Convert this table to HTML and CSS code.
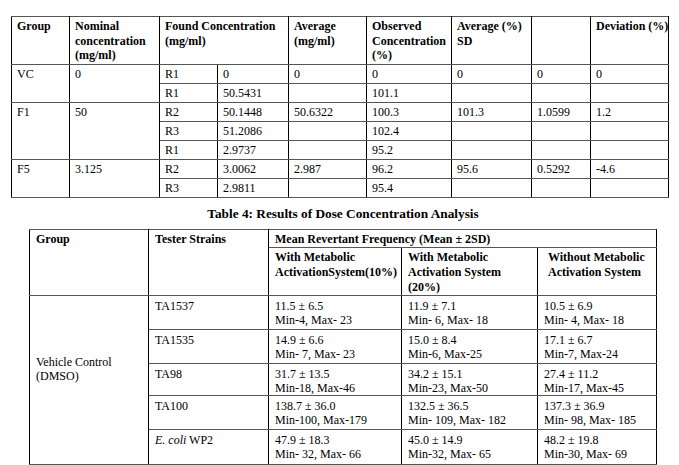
FILE: index.html
```html
<!DOCTYPE html>
<html>
<head>
<meta charset="utf-8">
<link rel="stylesheet" href="styles.css">
</head>
<body>
<div class="page">
  <table class="t1">
    <colgroup>
      <col style="width:58px"><col style="width:90px"><col style="width:58px"><col style="width:71px"><col style="width:78px"><col style="width:85px"><col style="width:80px"><col style="width:59px"><col style="width:78px">
    </colgroup>
    <thead>
      <tr class="hrow">
        <th>Group</th>
        <th>Nominal<br>concentration<br>(mg/ml)</th>
        <th colspan="2">Found Concentration<br>(mg/ml)</th>
        <th>Average<br>(mg/ml)</th>
        <th>Observed<br>Concentration<br>(%)</th>
        <th>Average (%)<br>SD</th>
        <th></th>
        <th>Deviation (%)</th>
      </tr>
    </thead>
    <tbody>
      <tr><td rowspan="2" class="grp">VC</td><td rowspan="2" class="grp">0</td><td>R1</td><td>0</td><td>0</td><td>0</td><td>0</td><td>0</td><td>0</td></tr>
      <tr><td>R1</td><td>50.5431</td><td></td><td>101.1</td><td></td><td></td><td></td></tr>
      <tr><td rowspan="3" class="grp">F1</td><td rowspan="3" class="grp">50</td><td>R2</td><td>50.1448</td><td>50.6322</td><td>100.3</td><td>101.3</td><td>1.0599</td><td>1.2</td></tr>
      <tr><td>R3</td><td>51.2086</td><td></td><td>102.4</td><td></td><td></td><td></td></tr>
      <tr><td>R1</td><td>2.9737</td><td></td><td>95.2</td><td></td><td></td><td></td></tr>
      <tr><td rowspan="2" class="grp">F5</td><td rowspan="2" class="grp">3.125</td><td>R2</td><td>3.0062</td><td>2.987</td><td>96.2</td><td>95.6</td><td>0.5292</td><td>-4.6</td></tr>
      <tr><td>R3</td><td>2.9811</td><td></td><td>95.4</td><td></td><td></td><td></td></tr>
    </tbody>
  </table>

  <div class="caption">Table 4: Results of Dose Concentration Analysis</div>

  <table class="t2">
    <colgroup>
      <col style="width:119px"><col style="width:120px"><col style="width:133px"><col style="width:136px"><col style="width:119px">
    </colgroup>
    <thead>
      <tr class="h1">
        <th rowspan="2">Group</th>
        <th rowspan="2">Tester Strains</th>
        <th colspan="3">Mean Revertant Frequency (Mean ± 2SD)</th>
      </tr>
      <tr class="h2">
        <th>With Metabolic<br>ActivationSystem(10%)</th>
        <th>With Metabolic<br>Activation System<br>(20%)</th>
        <th class="indent">Without Metabolic<br>Activation System</th>
      </tr>
    </thead>
    <tbody>
      <tr class="r34">
        <td rowspan="5" class="vc">Vehicle Control<br>(DMSO)</td>
        <td>TA1537</td>
        <td>11.5 ± 6.5<br>Min-4, Max- 23</td>
        <td>11.9 ± 7.1<br>Min- 6, Max- 18</td>
        <td>10.5 ± 6.9<br>Min- 4, Max- 18</td>
      </tr>
      <tr class="r34">
        <td>TA1535</td>
        <td>14.9 ± 6.6<br>Min- 7, Max- 23</td>
        <td>15.0 ± 8.4<br>Min-6, Max-25</td>
        <td>17.1 ± 6.7<br>Min-7, Max-24</td>
      </tr>
      <tr class="r32">
        <td>TA98</td>
        <td>31.7 ± 13.5<br>Min-18, Max-46</td>
        <td>34.2 ± 15.1<br>Min-23, Max-50</td>
        <td>27.4 ± 11.2<br>Min-17, Max-45</td>
      </tr>
      <tr class="r34">
        <td>TA100</td>
        <td>138.7 ± 36.0<br>Min-100, Max-179</td>
        <td>132.5 ± 36.5<br>Min- 109, Max- 182</td>
        <td>137.3 ± 36.9<br>Min- 98, Max- 185</td>
      </tr>
      <tr class="r35">
        <td><i>E. coli</i> WP2</td>
        <td>47.9 ± 18.3<br>Min- 32, Max- 66</td>
        <td>45.0 ± 14.9<br>Min-32, Max- 65</td>
        <td>48.2 ± 19.8<br>Min-30, Max- 69</td>
      </tr>
    </tbody>
  </table>
</div>
</body>
</html>
```

FILE: styles.css
```css
html, body {
  margin: 0;
  padding: 0;
  background: #ffffff;
}

body {
  font-family: "Liberation Serif", "Times New Roman", serif;
  font-size: 12px;
  color: #000;
}

.page {
  display: flex;
  flex-direction: column;
  align-items: flex-start;
  padding: 16px 11px 0 11px;
}

table {
  border-collapse: collapse;
  table-layout: fixed;
  border: 1px solid #000;
}

th, td {
  border-left: 1px solid #000;
  border-right: 1px solid #000;
  border-top: 1px solid #555;
  border-bottom: 1px solid #555;
  text-align: left;
  vertical-align: top;
  padding: 2px 0 0 5px;
  line-height: 14px;
  white-space: nowrap;
  overflow: visible;
}

th {
  font-weight: bold;
  line-height: 14.5px;
}

.t1 {
  width: 658px;
}

.t1 .hrow {
  height: 48px;
}

.t1 tbody tr {
  height: 19px;
}

.t1 td {
  padding-top: 2px;
}

.caption {
  align-self: stretch;
  text-align: center;
  font-weight: bold;
  font-size: 13.3px;
  line-height: 14px;
  margin-top: 9px;
  padding-left: 7px;
}

.t2 {
  width: 628px;
  margin-top: 8px;
  margin-left: 18px;
}

.t2 th, .t2 td {
  padding-left: 6px;
}

.t2 .h1 {
  height: 18px;
}

.t2 .h2 {
  height: 47px;
}

.t2 .h2 th {
  line-height: 15px;
}

.t2 .indent {
  padding-left: 10px;
}

.t2 tbody td {
  padding-top: 3px;
}

.t2 .r34 { height: 34px; }
.t2 .r32 { height: 32px; }
.t2 .r35 { height: 35px; }

.t2 td.vc {
  vertical-align: middle;
  padding-top: 0;
  padding-bottom: 22px;
}
```
